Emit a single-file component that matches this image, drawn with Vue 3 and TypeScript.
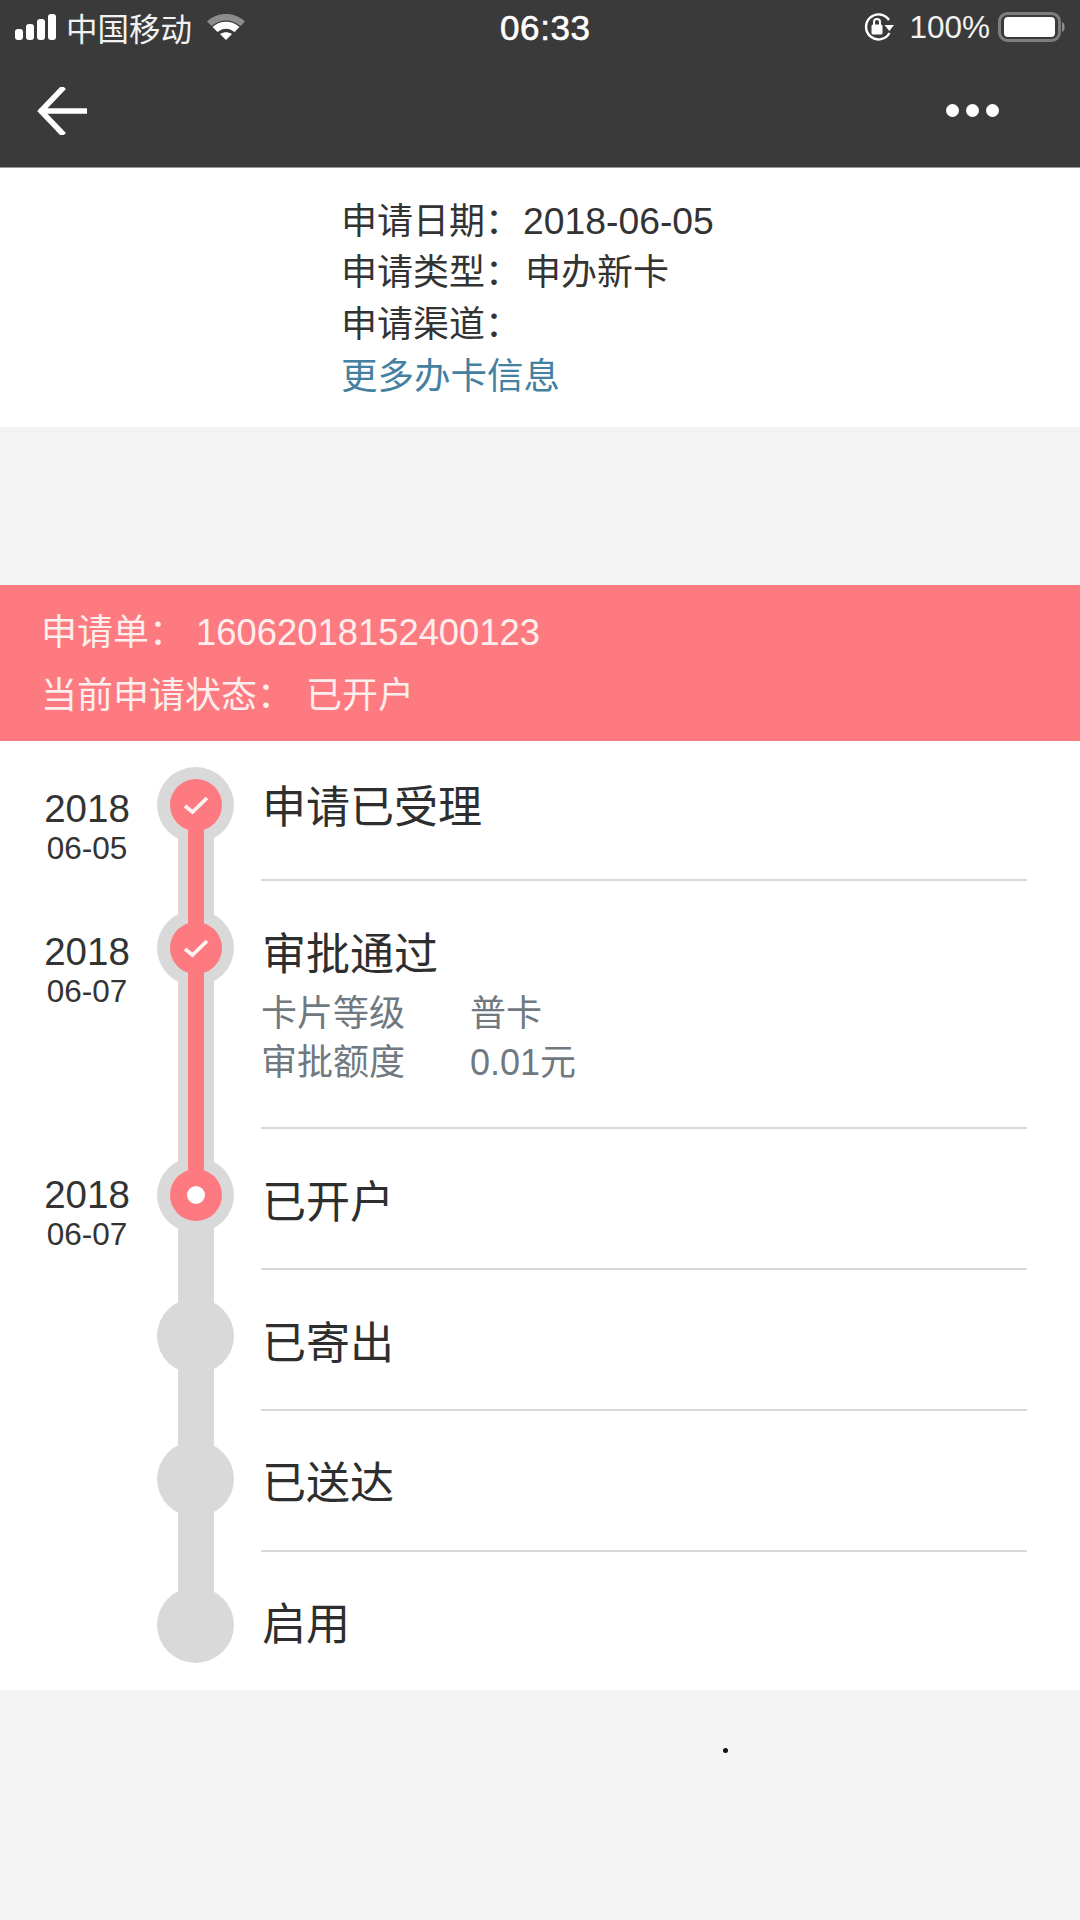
<script setup lang="ts">
interface Detail { label: string; value: string }
interface Step {
  title: string
  year?: string
  day?: string
  state: 'done' | 'current' | 'todo'
  height: number
  nodeTop: number
  titleTop: number
  dateTop?: number
  details?: Detail[]
  redBelow?: boolean
  redAbove?: boolean
  first?: boolean
  last?: boolean
}

const info = [
  { label: '申请日期：', value: '2018-06-05', kind: 'num' },
  { label: '申请类型：', value: '申办新卡', kind: 'cjk' },
  { label: '申请渠道：', value: '', kind: 'cjk' },
]

const steps: Step[] = [
  { title: '申请已受理', year: '2018', day: '06-05', state: 'done', height: 140, nodeTop: 26, titleTop: 42, dateTop: 46, redBelow: true, first: true },
  { title: '审批通过', year: '2018', day: '06-07', state: 'done', height: 248, nodeTop: 29, titleTop: 49, dateTop: 49, redAbove: true, redBelow: true,
    details: [{ label: '卡片等级', value: '普卡' }, { label: '审批额度', value: '0.01元' }] },
  { title: '已开户', year: '2018', day: '06-07', state: 'current', height: 141, nodeTop: 28, titleTop: 49, dateTop: 44, redAbove: true },
  { title: '已寄出', state: 'todo', height: 141, nodeTop: 28, titleTop: 49 },
  { title: '已送达', state: 'todo', height: 141, nodeTop: 30, titleTop: 48 },
  { title: '启用', state: 'todo', height: 138, nodeTop: 35, titleTop: 48, last: true },
]
</script>

<template>
  <div class="page">
    <header class="top">
      <div class="status">
        <div class="status-left">
          <svg class="signal" width="42" height="26" viewBox="0 0 42 26">
            <rect x="0" y="15" width="8" height="11" rx="3" fill="#fff" />
            <rect x="11" y="10" width="8" height="16" rx="3" fill="#fff" />
            <rect x="22" y="5" width="8" height="21" rx="3" fill="#fff" />
            <rect x="33" y="0" width="8" height="26" rx="3" fill="#fff" />
          </svg>
          <span class="carrier">中国移动</span>
          <svg class="wifi" width="38" height="26" viewBox="0 0 38 26">
            <path d="M0 7.500 C10 -2.500 28 -2.500 38 7.500 L33.500 12 C25 4.500 13 4.500 4.500 12 Z" fill="#8c8c8c" />
            <path d="M5.500 13 C13 6 25 6 32.500 13 L27.500 18 C22 13.500 16 13.500 10.500 18 Z" fill="#fff" />
            <path d="M13 20 C17 17.500 21 17.500 25 20 L19 26 Z" fill="#fff" />
          </svg>
        </div>
        <div class="clock">06:33</div>
        <div class="status-right">
          <svg class="lock" width="32" height="28" viewBox="0 0 32 28">
            <path d="M26 7 A12.500 12.500 0 1 0 26.500 20" fill="none" stroke="#fff" stroke-width="2.400" />
            <path d="M21.500 12 L31 12 L26.300 18 Z" fill="#fff" />
            <rect x="8.500" y="11.500" width="11" height="10" rx="1.500" fill="#fff" />
            <path d="M11 12 V9 a3 3 0 0 1 6 0 V12" fill="none" stroke="#fff" stroke-width="2" />
          </svg>
          <span class="percent">100%</span>
          <svg class="battery" width="68" height="30" viewBox="0 0 68 30">
            <rect x="1.500" y="1.500" width="60" height="27" rx="8" fill="none" stroke="#7d7d7d" stroke-width="3" />
            <rect x="6" y="5" width="51" height="20" rx="4" fill="#fff" />
            <path d="M64 10 C67.500 11 67.500 19 64 20 Z" fill="#8d8d8d" />
          </svg>
        </div>
      </div>
      <div class="nav">
        <svg class="back" width="50" height="48" viewBox="0 0 50 48">
          <path d="M25 2 L4 24 L25 46 M5 24 H49" fill="none" stroke="#fff" stroke-width="5.500" stroke-linecap="square" stroke-linejoin="miter" />
        </svg>
        <div class="more"><i></i><i></i><i></i></div>
      </div>
    </header>

    <section class="info">
      <div v-for="row in info" :key="row.label" class="info-row">
        <span class="info-label">{{ row.label }}</span><span :class="row.kind === 'num' ? 'info-num' : 'info-cjk'">{{ row.value }}</span>
      </div>
      <div class="info-row link">更多办卡信息</div>
    </section>

    <section class="banner">
      <div class="banner-row"><span class="banner-label first">申请单：</span><span class="banner-no">16062018152400123</span></div>
      <div class="banner-row"><span class="banner-label">当前申请状态：</span><span class="banner-state">已开户</span></div>
    </section>

    <section class="timeline">
      <div v-for="step in steps" :key="step.title" class="step" :style="{ height: step.height + 'px' }">
        <div class="date" :style="{ paddingTop: (step.dateTop ?? 0) + 'px' }">
          <div v-if="step.year" class="year">{{ step.year }}</div>
          <div v-if="step.day" class="day">{{ step.day }}</div>
        </div>
        <div class="rail">
          <span class="track" :class="{ first: step.first, last: step.last }" :style="{ '--node': step.nodeTop + 38 + 'px' }"></span>
          <div class="node" :style="{ marginTop: step.nodeTop + 'px' }">
            <div v-if="step.state !== 'todo'" class="core">
              <svg v-if="step.state === 'done'" width="30" height="24" viewBox="0 0 30 24">
                <path d="M4 13 L11.500 19 L26 5" fill="none" stroke="#fff3f0" stroke-width="3.800" />
              </svg>
              <span v-else class="hole"></span>
            </div>
          </div>
          <span v-if="step.redAbove" class="red-up" :style="{ height: step.nodeTop + 38 + 'px' }"></span>
          <span v-if="step.redBelow" class="red-down" :style="{ top: step.nodeTop + 38 + 'px' }"></span>
        </div>
        <div class="body" :class="{ ruled: !step.last }" :style="{ paddingTop: step.titleTop + 'px' }">
          <div class="title">{{ step.title }}</div>
          <div v-if="step.details" class="details">
            <div v-for="d in step.details" :key="d.label" class="detail">
              <span class="detail-label">{{ d.label }}</span><span>{{ d.value }}</span>
            </div>
          </div>
        </div>
      </div>
    </section>

    <footer class="foot"><span class="speck"></span></footer>
  </div>
</template>

<style>
html, body { margin: 0; padding: 0; background: #f3f3f3; }
</style>

<style scoped>
.page {
  width: 1080px;
  height: 1920px;
  overflow: hidden;
  background: #f3f3f3;
  color: #333;
  font-family: "Liberation Sans", "Noto Sans CJK SC", sans-serif;
}
.top { height: 167px; background: #3a3a3a; border-bottom: 1px solid #9a9a9a; color: #fff; }
.status { position: relative; height: 54px; display: flex; justify-content: space-between; align-items: center; }
.status-left { display: flex; align-items: center; padding-left: 15px; }
.carrier { font-size: 31.500px; margin-left: 9px; color: #f2f2f2; }
.wifi { margin-left: 15px; }
.clock { position: absolute; left: 500px; top: 9px; font-size: 35px; line-height: 38px; letter-spacing: 0.6px; font-weight: 400; -webkit-text-stroke: 0.6px #fff; }
.status-right { display: flex; align-items: center; padding-right: 14px; }
.percent { font-size: 31.500px; margin-left: 14px; margin-right: 8px; color: #f2f2f2; }
.nav { height: 113px; display: flex; justify-content: space-between; align-items: center; padding: 0 81px 0 37px; }
.more { display: flex; gap: 7px; }
.more i { display: block; width: 13px; height: 13px; border-radius: 50%; background: #fff; }

.info { height: 259px; box-sizing: border-box; background: #fff; padding: 27px 0 0 341px; }
.info-row { font-size: 36px; line-height: 52px; color: #333; height: 52px; white-space: pre; }
.info-label { display: inline-block; width: 182px; }
.info-num { font-size: 37.300px; }
.info-cjk { font-size: 36px; margin-left: 2px; }
.link { color: #44809f; font-size: 36.500px; }

.banner { margin-top: 158px; height: 156px; box-sizing: border-box; background: #fd7a80; padding: 16px 0 0 41px; color: #fdeeee; }
.banner-row { display: flex; font-size: 36px; line-height: 63px; height: 63px; }
.banner-label { display: inline-block; width: 265px; white-space: nowrap; }
.banner-label.first { width: 155px; }
.banner-no { font-size: 36.400px; }

.timeline { height: 949px; background: #fff; }
.step { display: flex; box-sizing: border-box; }
.date { width: 90px; margin-left: 42px; box-sizing: border-box; text-align: center; flex: none; color: #333; }
.year { font-size: 38.500px; line-height: 44px; }
.day { font-size: 31.500px; line-height: 34px; }
.rail { position: relative; width: 77px; margin-left: 25px; flex: none; }
.track { position: absolute; left: 21px; width: 36px; top: 0; bottom: 0; background: #d9d9d9; }
.track.first { top: var(--node); }
.track.last { bottom: auto; height: var(--node); }
.red-up, .red-down { position: absolute; left: 31px; width: 16px; background: #fd7a80; }
.red-up { top: 0; }
.red-down { bottom: 0; }
.node { position: relative; width: 77px; height: 76px; border-radius: 50%; background: #d9d9d9; display: flex; align-items: center; justify-content: center; }
.core { position: relative; z-index: 3; width: 52px; height: 52px; border-radius: 50%; background: #fd7a80; display: flex; align-items: center; justify-content: center; }
.hole { width: 18px; height: 18px; border-radius: 50%; background: #fff; }
.body { width: 766px; margin-left: 27px; box-sizing: border-box; flex: none; padding-left: 1px; }
.body.ruled { border-bottom: 2px solid #d8d8d8; }
.title { font-size: 44px; line-height: 50px; color: #2e2e2e; }
.details { margin-top: 9px; color: #707980; font-size: 36px; margin-left: -1px; }
.detail { display: flex; height: 49px; line-height: 49px; }
.detail-label { width: 209px; }

.foot { position: relative; height: 230px; }
.speck { position: absolute; left: 723px; top: 58px; width: 5px; height: 5px; border-radius: 50%; background: #111; }
</style>
